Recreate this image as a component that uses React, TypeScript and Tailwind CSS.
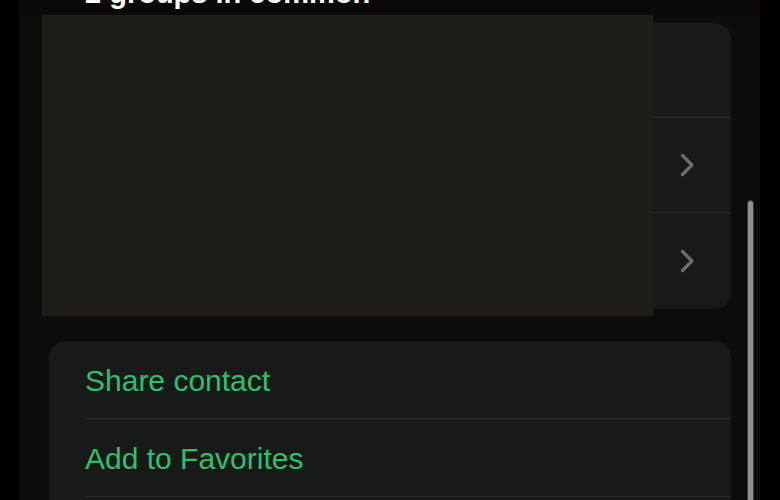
import React from "react";

const Chevron = () => (
  <svg width="16" height="24" viewBox="0 0 16 24" fill="none">
    <path d="M3.5 2.5 L13 12 L3.5 21.5" stroke="#6b6e6e" strokeWidth="3.2" strokeLinecap="round" strokeLinejoin="round" />
  </svg>
);

export default function App() {
  const font = { fontFamily: '"Liberation Sans", Arial, sans-serif' };
  return (
    <div className="w-[780px] h-[500px] bg-black flex overflow-hidden" style={font}>
      <div className="ml-[19px] w-[741px] h-full bg-[#0c0c0c] relative overflow-hidden flex flex-col">
        <div className="h-[15px] bg-[#0a0808] overflow-hidden pl-[66px] shrink-0">
          <div className="-mt-[21px] text-[29px] leading-[29px] font-bold text-white whitespace-nowrap">
            2 groups in common
          </div>
        </div>

        <div className="pl-[30px] pr-[29px] pt-[8px] flex flex-col gap-[32px]">
          <div className="bg-[#181a1a] rounded-[16px] flex flex-col">
            <div className="h-[95px] ml-[36px] border-b border-[#2a2c2c]" />
            <div className="h-[95px] ml-[36px] border-b border-[#2a2c2c] flex items-center justify-end pr-[36px]">
              <Chevron />
            </div>
            <div className="h-[96px] ml-[36px] flex items-center justify-end pr-[36px]">
              <Chevron />
            </div>
          </div>

          <div className="bg-[#181a1a] rounded-[16px] flex flex-col">
            <div className="h-[78px] ml-[36px] border-b border-[#2a2c2c] flex items-center">
              <span className="pt-[2px] text-[30px] leading-[30px] text-[#30c06a]">Share contact</span>
            </div>
            <div className="h-[78px] ml-[36px] border-b border-[#2a2c2c] flex items-center">
              <span className="pt-[2px] text-[30px] leading-[30px] text-[#30c06a]">Add to Favorites</span>
            </div>
            <div className="h-[78px] ml-[36px]" />
          </div>
        </div>

        <div className="absolute left-[23px] top-[15px] w-[611px] h-[301px] bg-[#1f1d1a]" />
        <div className="absolute left-[728px] top-[200px] w-[7px] h-[320px] rounded-full bg-[#8e8e8e] border border-[#3a3a3a]" />
      </div>
    </div>
  );
}
